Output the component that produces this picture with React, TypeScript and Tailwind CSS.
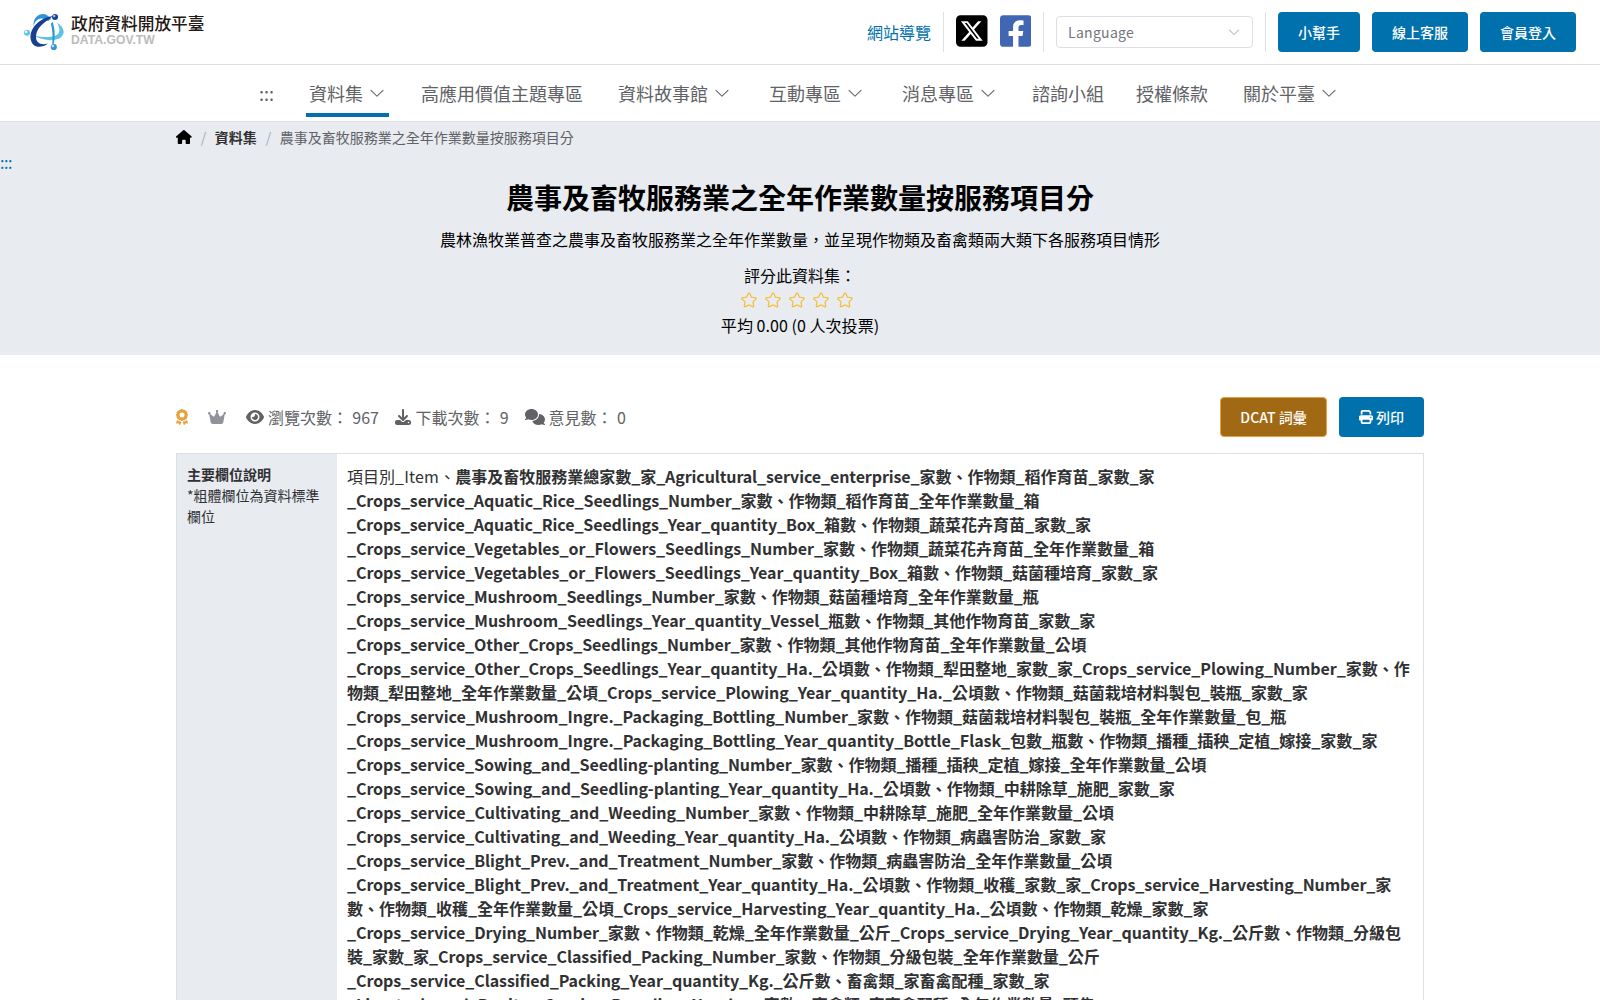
import React from "react";
import { FaAward, FaComments, FaCrown, FaDownload, FaEye, FaHouse, FaPrint, FaSquareXTwitter } from "react-icons/fa6";

const ArrowDown = ({ className }: { className: string }) => (
  <svg viewBox="0 0 1024 1024" fill="currentColor" className={className}>
    <path d="M831.872 340.864 512 652.672 192.128 340.864a30.592 30.592 0 0 0-42.752 0 29.12 29.12 0 0 0 0 41.6L489.664 714.24a32 32 0 0 0 44.672 0l340.288-331.712a29.12 29.12 0 0 0 0-41.728 30.592 30.592 0 0 0-42.752 0z" />
  </svg>
);

const Star = () => (
  <svg viewBox="0 0 1024 1024" fill="currentColor" className="h-[18px] w-[18px]">
    <path d="m512 747.84 228.16 119.936a6.4 6.4 0 0 0 9.28-6.72l-43.52-254.08 184.512-179.904a6.4 6.4 0 0 0-3.52-10.88l-255.104-37.12L517.76 147.904a6.4 6.4 0 0 0-11.52 0L392.192 379.072l-255.104 37.12a6.4 6.4 0 0 0-3.52 10.88L318.08 606.976l-43.584 254.08a6.4 6.4 0 0 0 9.28 6.72zM313.6 924.48a70.4 70.4 0 0 1-102.144-74.24l37.888-220.928L88.96 472.96A70.4 70.4 0 0 1 128 352.896l221.76-32.256 99.2-200.96a70.4 70.4 0 0 1 126.208 0l99.2 200.96 221.824 32.256a70.4 70.4 0 0 1 39.04 120.064L774.72 629.376l37.888 220.928a70.4 70.4 0 0 1-102.144 74.24L512 820.096l-198.4 104.32z" />
  </svg>
);

const Logo = () => (
  <div className="flex items-start">
    <svg viewBox="0 0 40 38" className="mt-[13px] h-[38px] w-[40px]">
      <path d="M33 9.500 C38.500 13 41 18 39 21.500 C36 29 20 29 7.500 21.500 C18 25.500 33 25 35 19.500 C36 17 35 13 33 9.500Z" fill="#5cc3e4" />
      <path d="M9.500 13 C9 5 14 1 19 1 C22 1 25 3 27 6 L24 8 C21.500 6 18 5.200 16 5.800 C13 6.500 10.500 9 9.500 13Z M28.500 9 C31 15 31.500 24 29.500 31.500 L28.300 31 C28.900 23 28.500 16 26.800 10.500Z" fill="#3095d6" />
      <path d="M29 3 C22 9 13 13 12 23 C11.500 30 17 32.500 24 30.500 C17 36 7.500 35 6.500 25 C6 14 16 5 29 3Z" fill="#173f94" />
      <circle cx="31" cy="4" r="3" fill="#173f94" />
      <circle cx="30.200" cy="3" r="1.200" fill="#a8c4ee" />
      <circle cx="3" cy="19.800" r="3" fill="#5cc3e4" />
      <circle cx="2.200" cy="18.900" r="1.300" fill="#e6f7fc" />
      <circle cx="29.800" cy="34" r="3.100" fill="#3095d6" />
      <circle cx="28.900" cy="33" r="1.300" fill="#c8e6f8" />
    </svg>
    <div className="mt-[13px] ml-[7px]">
      <div className="h-[20px] text-[16.7px] leading-[20px] font-medium text-[#231815]">政府資料開放平臺</div>
      <div className="mt-px h-[12px] font-['Liberation_Sans',sans-serif] text-[12.2px] leading-[12px] font-bold text-[#bcbcbc]">
        DATA.GOV.TW
      </div>
    </div>
  </div>
);

const Divider = () => <div className="h-10 w-px bg-[#dcdfe6]" />;

const HeaderButton = ({ children }: { children: React.ReactNode }) => (
  <button className="h-10 rounded bg-[#0071ac] px-5 text-[14px] leading-none font-medium text-white">{children}</button>
);

const NavItem = ({ label, arrow, active, className = "" }: { label: string; arrow?: boolean; active?: boolean; className?: string }) => (
  <a className={`flex h-[45px] items-center border-b-4 pt-[2px] ${active ? "border-[#0071ac]" : "border-transparent"} px-[3px] ${className}`}>
    {label}
    {arrow && <ArrowDown className="-mt-[2px] ml-[5px] h-[18px] w-[18px]" />}
  </a>
);

// Each line carries the tracking, in px, of its Latin runs.
const boldLines: [string, number][] = [
  ["_Crops_service_Aquatic_Rice_Seedlings_Number_家數、作物類_稻作育苗_全年作業數量_箱", -0.106],
  ["_Crops_service_Aquatic_Rice_Seedlings_Year_quantity_Box_箱數、作物類_蔬菜花卉育苗_家數_家", -0.113],
  ["_Crops_service_Vegetables_or_Flowers_Seedlings_Number_家數、作物類_蔬菜花卉育苗_全年作業數量_箱", -0.054],
  ["_Crops_service_Vegetables_or_Flowers_Seedlings_Year_quantity_Box_箱數、作物類_菇菌種培育_家數_家", -0.061],
  ["_Crops_service_Mushroom_Seedlings_Number_家數、作物類_菇菌種培育_全年作業數量_瓶", -0.093],
  ["_Crops_service_Mushroom_Seedlings_Year_quantity_Vessel_瓶數、作物類_其他作物育苗_家數_家", -0.072],
  ["_Crops_service_Other_Crops_Seedlings_Number_家數、作物類_其他作物育苗_全年作業數量_公頃", -0.087],
  ["_Crops_service_Other_Crops_Seedlings_Year_quantity_Ha._公頃數、作物類_犁田整地_家數_家_Crops_service_Plowing_Number_家數、作", -0.07],
  ["物類_犁田整地_全年作業數量_公頃_Crops_service_Plowing_Year_quantity_Ha._公頃數、作物類_菇菌栽培材料製包_裝瓶_家數_家", -0.085],
  ["_Crops_service_Mushroom_Ingre._Packaging_Bottling_Number_家數、作物類_菇菌栽培材料製包_裝瓶_全年作業數量_包_瓶", -0.05],
  ["_Crops_service_Mushroom_Ingre._Packaging_Bottling_Year_quantity_Bottle_Flask_包數_瓶數、作物類_播種_插秧_定植_嫁接_家數_家", -0.049],
  ["_Crops_service_Sowing_and_Seedling-planting_Number_家數、作物類_播種_插秧_定植_嫁接_全年作業數量_公頃", -0.091],
  ["_Crops_service_Sowing_and_Seedling-planting_Year_quantity_Ha._公頃數、作物類_中耕除草_施肥_家數_家", -0.078],
  ["_Crops_service_Cultivating_and_Weeding_Number_家數、作物類_中耕除草_施肥_全年作業數量_公頃", -0.06],
  ["_Crops_service_Cultivating_and_Weeding_Year_quantity_Ha._公頃數、作物類_病蟲害防治_家數_家", -0.07],
  ["_Crops_service_Blight_Prev._and_Treatment_Number_家數、作物類_病蟲害防治_全年作業數量_公頃", -0.078],
  ["_Crops_service_Blight_Prev._and_Treatment_Year_quantity_Ha._公頃數、作物類_收穫_家數_家_Crops_service_Harvesting_Number_家", -0.086],
  ["數、作物類_收穫_全年作業數量_公頃_Crops_service_Harvesting_Year_quantity_Ha._公頃數、作物類_乾燥_家數_家", -0.085],
  ["_Crops_service_Drying_Number_家數、作物類_乾燥_全年作業數量_公斤_Crops_service_Drying_Year_quantity_Kg._公斤數、作物類_分級包", -0.084],
  ["裝_家數_家_Crops_service_Classified_Packing_Number_家數、作物類_分級包裝_全年作業數量_公斤", -0.065],
  ["_Crops_service_Classified_Packing_Year_quantity_Kg._公斤數、畜禽類_家畜禽配種_家數_家", -0.075],
  ["_Livestock_and_Poultry_Service_Breeding_Number_家數、畜禽類_家畜禽配種_全年作業數量_頭隻", -0.07],
];

const Tracked = ({ text, tracking }: { text: string; tracking: number }) => (
  <>
    {text.split(/([\x20-\x7e]+)/).map((run, i) =>
      i % 2 === 1 ? (
        <span key={i} style={{ letterSpacing: `${tracking}px` }}>
          {run}
        </span>
      ) : (
        run
      ),
    )}
  </>
);

export default function App() {
  return (
    <div lang="zh-TW" className="h-[1000px] overflow-hidden bg-white font-['Noto_Sans_CJK_TC',sans-serif] text-[16px] text-[#303133]">
      <header className="flex h-[65px] justify-between border-b border-[#dcdfe6] px-6">
        <Logo />
        <div className="flex h-16 items-center gap-3">
          <a className="text-[16px] text-[#0071ac]">網站導覽</a>
          <Divider />
          <FaSquareXTwitter className="-mt-[2px] h-9 w-[31.5px] text-black" />
          <svg viewBox="0 0 448 512" fill="currentColor" className="-mt-[2px] h-9 w-[31.5px] text-[#4267b2]">
            <path d="M400 32H48A48 48 0 0 0 0 80v352a48 48 0 0 0 48 48h137.25V327.690h-63V256h63v-54.640c0-62.150 37-96.480 93.670-96.480 27.140 0 55.520 4.840 55.520 4.840v61h-31.270c-30.810 0-40.420 19.120-40.420 38.730V256h68.780l-11 71.690h-57.780V480H400a48 48 0 0 0 48-48V80a48 48 0 0 0-48-48z" />
          </svg>
          <Divider />
          <div className="flex h-8 w-[197px] items-center justify-between rounded border border-[#dcdfe6] px-[11px] text-[14px] text-[#73767a]">
            <span className="tracking-[0.3px]">Language</span>
            <ArrowDown className="h-[14px] w-[14px] text-[#a8abb2]" />
          </div>
          <Divider />
          <HeaderButton>小幫手</HeaderButton>
          <HeaderButton>線上客服</HeaderButton>
          <HeaderButton>會員登入</HeaderButton>
        </div>
      </header>

      <nav className="flex h-[57px] items-start border-b border-[#dcdfe6] pt-[7px] pl-[256px] text-[18px] text-[#606266]">
        <NavItem label=":::" className="w-[21px]" />
        <NavItem label="資料集" arrow active className="ml-[29px]" />
        <NavItem label="高應用價值主題專區" className="ml-[29px]" />
        <NavItem label="資料故事館" arrow className="ml-[29px]" />
        <NavItem label="互動專區" arrow className="ml-[32px]" />
        <NavItem label="消息專區" arrow className="ml-[32px]" />
        <NavItem label="諮詢小組" className="ml-[29px]" />
        <NavItem label="授權條款" className="ml-[26px]" />
        <NavItem label="關於平臺" arrow className="ml-[29px]" />
      </nav>

      <section className="h-[233px] bg-[#e8ebf0] text-black">
        <div className="mx-auto flex h-[30px] w-[1248px] items-center text-[14px] text-[#606266]">
          <FaHouse className="h-[14px] w-[15.75px] text-black" />
          <span className="mx-[9px] w-[5px] text-[#a8abb2]">/</span>
          <span className="font-bold text-[#303133]">資料集</span>
          <span className="mx-[9px] w-[5px] text-[#a8abb2]">/</span>
          <span>農事及畜牧服務業之全年作業數量按服務項目分</span>
        </div>
        <div className="h-[24px] text-[16px] leading-[20px] tracking-[-0.4px] text-[#0071ac]">:::</div>
        <div className="flex flex-col items-center">
          <h1 className="h-[42px] text-[28px] leading-[42px] font-bold">農事及畜牧服務業之全年作業數量按服務項目分</h1>
          <p className="mt-[9px] h-[24px] leading-[24px]">農林漁牧業普查之農事及畜牧服務業之全年作業數量，並呈現作物類及畜禽類兩大類下各服務項目情形</p>
          <p className="mt-[12px] h-[24px] leading-[24px]">評分此資料集：</p>
          <div className="flex h-[26px] items-center gap-[6px] pr-[6px] text-[#f7ba2a]">
            <Star />
            <Star />
            <Star />
            <Star />
            <Star />
          </div>
          <p className="h-[24px] leading-[24px] tracking-[0.05px]">平均 0.00 (0 人次投票)</p>
        </div>
      </section>

      <main className="mx-auto w-[1248px] pt-[42px]">
        <div className="flex h-10 items-center justify-between">
          <div className="flex items-center text-[16px] text-[#606266] [word-spacing:0.7px]">
            <FaAward className="h-4 w-3 text-[#e6a23c]" />
            <FaCrown className="ml-5 h-4 w-[18px] text-[#909399]" />
            <FaEye className="mr-1 ml-5 h-4 w-[18px]" />
            瀏覽次數： 967
            <FaDownload className="mr-1 ml-[16.5px] h-4 w-4" />
            下載次數： 9
            <FaComments className="mr-1 ml-4 h-4 w-5" />
            意見數： 0
          </div>
          <div className="flex gap-3 text-[14px] font-medium text-white">
            <button className="h-10 w-[107px] rounded border border-[#e6a23c] bg-[#a16914]">DCAT 詞彙</button>
            <button className="flex h-10 items-center gap-[3px] rounded bg-[#0071ac] px-5">
              <FaPrint className="h-[14px] w-[14px]" />
              列印
            </button>
          </div>
        </div>

        <div className="mt-4 flex h-[600px] border border-[#dcdfe6]">
          <div className="w-[160px] shrink-0 bg-[#e8ebf0] px-[10px] pt-[10px] text-[14px] leading-[21px]">
            <div className="font-bold">主要欄位說明</div>
            <div>*粗體欄位為資料標準欄位</div>
          </div>
          <div className="px-[10px] pt-[10px] text-[16px] leading-[24px] whitespace-nowrap">
            <div>
              <Tracked text="項目別_Item、" tracking={0.2} />
              <b className="font-bold">
                <Tracked text="農事及畜牧服務業總家數_家_Agricultural_service_enterprise_家數、作物類_稻作育苗_家數_家" tracking={-0.107} />
              </b>
            </div>
            {boldLines.map(([line, tracking]) => (
              <div key={line} className="font-bold">
                <Tracked text={line} tracking={tracking} />
              </div>
            ))}
          </div>
        </div>
      </main>
    </div>
  );
}
